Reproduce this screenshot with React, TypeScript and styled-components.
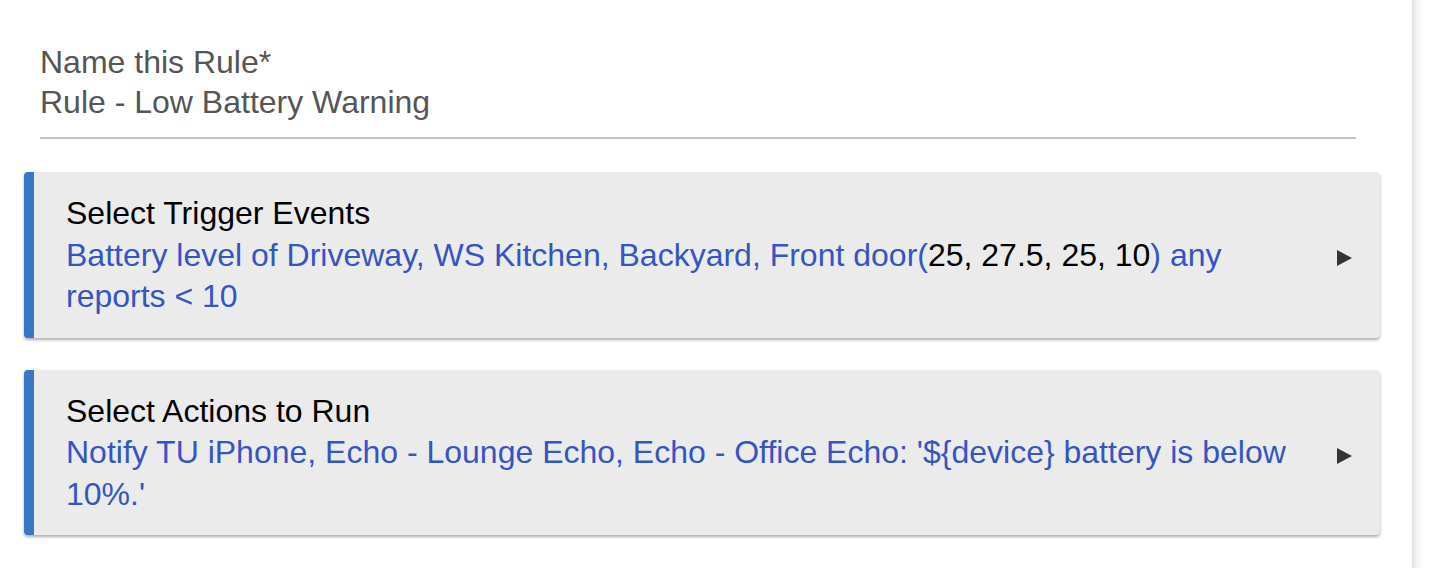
import styled, { createGlobalStyle } from 'styled-components';

const GlobalStyle = createGlobalStyle`
  html, body {
    margin: 0;
    padding: 0;
    background: #fff;
  }
  body {
    font-family: 'Liberation Sans', Arial, sans-serif;
  }
`;

const Page = styled.div`
  display: flex;
  width: 1448px;
  height: 568px;
  overflow: hidden;
`;

const Main = styled.div`
  flex: 0 0 1412px;
  display: flex;
  flex-direction: column;
  gap: 32px;
  padding: 42px 32px 0 24px;
  box-sizing: border-box;
`;

const SidePanel = styled.div`
  flex: 1;
  background: linear-gradient(to right, #e6e6e6 0px, #f6f6f6 5px, #ffffff 11px);
  border-left: 1px solid #e2e2e2;
`;

const Field = styled.div`
  margin: 0 24px 1px 16px;
  padding-bottom: 15px;
  border-bottom: 2px solid #c4c4c4;
  color: #555;
  font-size: 32px;
  line-height: 40px;
`;

const Label = styled.div``;

const Value = styled.div``;

const Card = styled.div`
  display: flex;
  align-items: center;
  gap: 36px;
  background: #ebebeb;
  border-left: 10px solid #3876c6;
  border-radius: 4px;
  box-shadow: 0 2px 3px rgba(0, 0, 0, 0.32);
  padding: 21px 28px 20px 32px;
  min-height: 124px;
`;

const CardBody = styled.div`
  flex: 1;
  font-size: 32px;
  line-height: 41.5px;
`;

const CardTitle = styled.div`
  color: #000;
`;

const Summary = styled.div`
  color: #3555c2;
`;

const Plain = styled.span`
  color: #000;
`;

const Arrow = styled.span`
  width: 0;
  height: 0;
  margin-top: 6px;
  border-top: 8px solid transparent;
  border-bottom: 8px solid transparent;
  border-left: 15px solid #30353a;
`;

type RuleSection = {
  title: string;
  summary: React.ReactNode;
};

const sections: RuleSection[] = [
  {
    title: 'Select Trigger Events',
    summary: (
      <>
        Battery level of Driveway, WS Kitchen, Backyard, Front door(<Plain>25, 27.5, 25, 10</Plain>) any reports &lt; 10
      </>
    ),
  },
  {
    title: 'Select Actions to Run',
    summary: <>Notify TU iPhone, Echo - Lounge Echo, Echo - Office Echo: '${'{device}'} battery is below 10%.'</>,
  },
];

const App: React.FC = () => {
  return (
    <Page>
      <GlobalStyle />
      <Main>
        <Field>
          <Label>Name this Rule*</Label>
          <Value>Rule - Low Battery Warning</Value>
        </Field>
        {sections.map((s) => (
          <Card key={s.title}>
            <CardBody>
              <CardTitle>{s.title}</CardTitle>
              <Summary>{s.summary}</Summary>
            </CardBody>
            <Arrow />
          </Card>
        ))}
      </Main>
      <SidePanel />
    </Page>
  );
};

export default App;
